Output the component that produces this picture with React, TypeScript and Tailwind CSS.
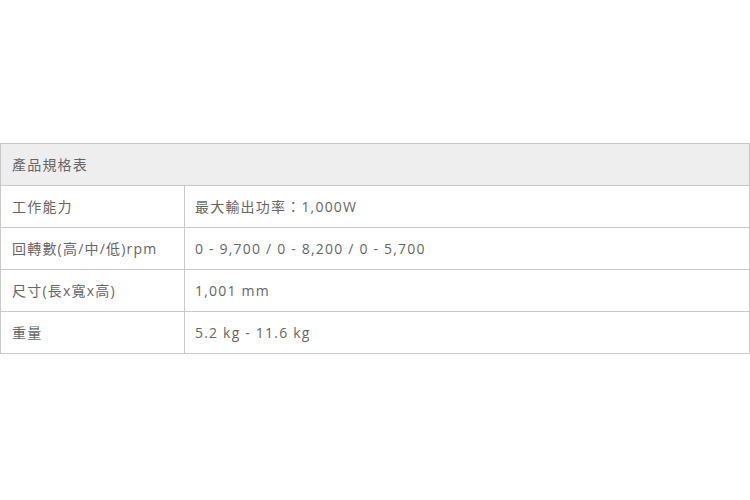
const SPECS: { label: string; value: string }[] = [
  { label: '工作能力', value: '最大輸出功率：1,000W' },
  { label: '回轉數(高/中/低)rpm', value: '0 - 9,700 / 0 - 8,200 / 0 - 5,700' },
  { label: '尺寸(長x寬x高)', value: '1,001 mm' },
  { label: '重量', value: '5.2 kg - 11.6 kg' },
]

const App = () => {
  return (
    <div
      className="w-[750px] h-[500px] bg-white pt-[143px]"
      style={{ fontFamily: '"Open Sans", "Noto Sans CJK TC", sans-serif' }}
    >
      <table className="w-full border-collapse text-[14px] tracking-[1.2px] text-[#666]">
        <thead>
          <tr className="h-[42px] bg-[#eeeeee]">
            <th colSpan={2} className="border border-[#c8c8c8] px-[11px] text-left font-normal">
              產品規格表
            </th>
          </tr>
        </thead>
        <tbody>
          {SPECS.map(row => (
            <tr key={row.label} className="h-[42px]">
              <td className="w-[184px] border border-[#c8c8c8] px-[11px]">{row.label}</td>
              <td className="border border-[#c8c8c8] px-[10px]">{row.value}</td>
            </tr>
          ))}
        </tbody>
      </table>
    </div>
  )
}

export default App
